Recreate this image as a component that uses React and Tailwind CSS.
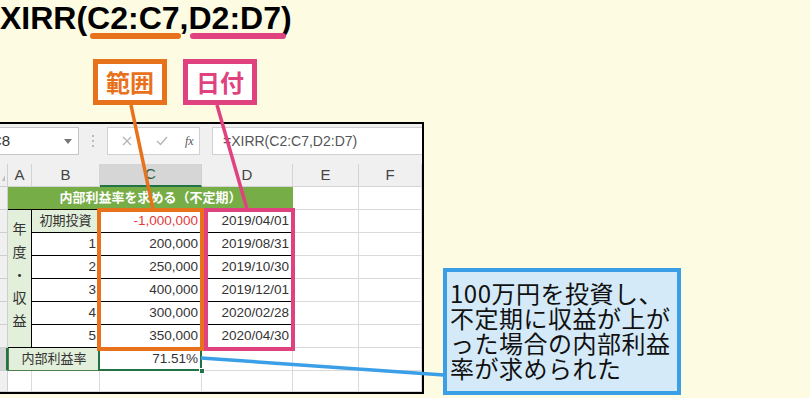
import React from 'react';

const ORANGE = '#e8711b';

// 空セル（グリッド線のみ）
function Empty() {
  return <div className="border-r border-b border-[#dadada] bg-white" />;
}

function RowHead({ selected = false }) {
  return (
    <div
      className={
        selected
          ? 'bg-[#d6d6d6] border-r-2 border-b border-r-[#217346] border-b-[#cfcfcf]'
          : 'bg-[#f0f0f0] border-r border-b border-[#cfcfcf]'
      }
    />
  );
}

function ColHead({ label, selected = false }) {
  return (
    <div
      className={
        selected
          ? 'bg-[#d6d6d6] border-r border-b-2 border-r-[#cfcfcf] border-b-[#217346] text-[#2b5a3f] text-[15px] flex items-center justify-center'
          : 'bg-[#f0f0f0] border-r border-b border-[#d4d4d4] text-[#444] text-[15px] flex items-center justify-center'
      }
    >
      {label}
    </div>
  );
}

function Num({ children, red = false }) {
  return (
    <div
      className={`border-r border-b border-black bg-white flex items-center justify-end pr-[3px] text-[13.5px] ${
        red ? 'text-[#e23b3b]' : 'text-[#333]'
      }`}
    >
      {children}
    </div>
  );
}

const rows = [
  { b: '1', c: '200,000', d: '2019/08/31' },
  { b: '2', c: '250,000', d: '2019/10/30' },
  { b: '3', c: '400,000', d: '2019/12/01' },
  { b: '4', c: '300,000', d: '2020/02/28' },
  { b: '5', c: '350,000', d: '2020/04/30' },
];

export default function App() {
  return (
    <div className="relative w-[810px] h-[398px] overflow-hidden bg-[#fdfbe2] font-['Liberation_Sans','Noto_Sans_CJK_JP',sans-serif]">
      {/* 数式タイトル */}
      <div className="h-[59px] text-[32px] leading-[36px] font-bold text-black whitespace-nowrap">
        XIRR(
        <span className="relative">
          C2:C7
          <span className="absolute left-[3px] right-[-1px] top-[33px] h-[6px] rounded-full bg-[#e8711b]" />
        </span>
        ,
        <span className="relative">
          D2:D7
          <span className="absolute left-[2px] right-[-5px] top-[33px] h-[6px] rounded-full bg-[#e0427f]" />
        </span>
        )
      </div>

      {/* ラベル */}
      <div className="flex gap-[16px] pl-[93px] h-[46px]">
        <div className="w-[74px] h-[46px] border-[5px] border-[#e8711b] bg-white flex items-center justify-center text-[24px] font-bold text-[#e8711b] font-['Noto_Sans_CJK_JP',sans-serif]">
          範囲
        </div>
        <div className="w-[74px] h-[46px] border-[5px] border-[#e0427f] bg-white flex items-center justify-center text-[24px] font-bold text-[#e0427f] font-['Noto_Sans_CJK_JP',sans-serif]">
          日付
        </div>
      </div>

      {/* Excel ウィンドウ */}
      <div className="mt-[17px] w-[424px] h-[272px] border-t-2 border-r-2 border-b-2 border-black bg-white flex flex-col">
        {/* 数式バー */}
        <div className="h-[40px] bg-[#f0f0f0] flex items-start pt-[3px]">
          <div className="ml-[-12px] w-[91px] h-[28px] bg-white border border-[#c6c6c6] flex items-center pl-[2px] pr-[6px] text-[15px] text-[#333]">
            C8
            <svg className="ml-auto" width="8" height="5" viewBox="0 0 8 5">
              <path d="M0 0 L8 0 L4 5 Z" fill="#777" />
            </svg>
          </div>
          <div className="w-[28px] h-[28px] flex flex-col items-center justify-center gap-[3px]">
            <span className="w-[2px] h-[2px] bg-[#bbb]" />
            <span className="w-[2px] h-[2px] bg-[#bbb]" />
            <span className="w-[2px] h-[2px] bg-[#bbb]" />
          </div>
          <div className="w-[93px] h-[28px] bg-white border border-[#d0d0d0] flex items-center">
            <svg className="ml-[14px]" width="10" height="10" viewBox="0 0 10 10">
              <path d="M1 1 L9 9 M9 1 L1 9" stroke="#b5b5b5" strokeWidth="1.3" />
            </svg>
            <svg className="ml-[24px]" width="12" height="10" viewBox="0 0 12 10">
              <path d="M1 5 L4.5 8.5 L11 1" stroke="#b5b5b5" strokeWidth="1.4" fill="none" />
            </svg>
            <span className="ml-[17px] text-[12px] italic text-[#555] font-['Liberation_Serif',serif]">fx</span>
          </div>
          <div className="ml-[12px] flex-1 h-[28px] bg-white border-y border-l border-[#d0d0d0] flex items-center pl-[10px] text-[14px] text-[#555]">
            =XIRR(C2:C7,D2:D7)
          </div>
        </div>

        {/* シート */}
        <div className="flex-1 grid grid-cols-[8px_24px_68px_102px_91px_66px_63px] grid-rows-[repeat(9,23px)_1fr]">
          {/* 列見出し */}
          <div className="bg-[#f0f0f0] border-r border-b border-[#cfcfcf] flex items-end justify-end p-[2px]">
            <svg width="6" height="12" viewBox="0 0 6 12">
              <path d="M6 0 L6 12 L0 12 Z" fill="#bdbdbd" />
            </svg>
          </div>
          <ColHead label="A" />
          <ColHead label="B" />
          <ColHead label="C" selected />
          <ColHead label="D" />
          <ColHead label="E" />
          <ColHead label="F" />

          {/* 1行目 */}
          <RowHead />
          <div className="col-span-4 bg-[#77ad47] border-b border-black text-white font-bold text-[13px] flex items-center justify-center">
            内部利益率を求める（不定期）
          </div>
          <Empty />
          <Empty />

          {/* 2行目 */}
          <RowHead />
          <div className="row-span-6 bg-[#e2efda] border-r border-b border-black flex flex-col items-center justify-center text-[14px] leading-[23px] text-[#333] pb-[6px]">
            <span>年</span>
            <span>度</span>
            <span>・</span>
            <span>収</span>
            <span>益</span>
          </div>
          <div className="bg-[#e2efda] border-r border-b border-black flex items-center justify-center text-[13px] text-[#333]">
            初期投資
          </div>
          <Num red>-1,000,000</Num>
          <Num>2019/04/01</Num>
          <Empty />
          <Empty />

          {rows.map((r) => (
            <React.Fragment key={r.b}>
              <RowHead />
              <Num>{r.b}</Num>
              <Num>{r.c}</Num>
              <Num>{r.d}</Num>
              <Empty />
              <Empty />
            </React.Fragment>
          ))}

          {/* 8行目 */}
          <RowHead selected />
          <div className="col-span-2 bg-[#e2efda] border-l border-r border-b border-[#4e7f4e] flex items-center justify-center text-[13px] text-[#333]">
            内部利益率
          </div>
          <div className="relative border-r border-b border-[#dadada] bg-white flex items-center justify-end pr-[3px] text-[13.5px] text-[#333]">
            71.51%
            <div className="absolute left-[-2px] top-[-1px] right-[-1px] bottom-[-1px] border-2 border-[#217346]" />
            <div className="absolute right-[-4px] bottom-[-4px] w-[6px] h-[6px] bg-[#217346] border border-white" />
          </div>
          <Empty />
          <Empty />
          <Empty />

          {/* 9行目 */}
          <RowHead />
          <Empty />
          <Empty />
          <Empty />
          <Empty />
          <Empty />
          <Empty />
        </div>
      </div>

      {/* 範囲の枠 */}
      <div className="absolute left-[97px] top-[208px] w-[107px] h-[143px] border-4 border-[#e8711b]" />
      <div className="absolute left-[204px] top-[208px] w-[91px] h-[143px] border-4 border-[#e0427f]" />

      {/* 引き出し線 */}
      <svg className="absolute left-0 top-0 pointer-events-none" width="810" height="398">
        <line x1="131" y1="105" x2="153" y2="209" stroke={ORANGE} strokeWidth="3.5" />
        <line x1="217" y1="105" x2="247" y2="209" stroke="#e0427f" strokeWidth="3.5" />
        <line x1="201" y1="358" x2="444" y2="375" stroke="#3a9fe6" strokeWidth="3.5" />
      </svg>

      {/* 吹き出し */}
      <div className="absolute left-[443px] top-[268px] w-[238px] h-[127px] border-4 border-[#3a9fe6] bg-[#d5eaf8] pl-[3px] pt-[8px] text-[24px] leading-[25px] tracking-[0.5px] text-[#111] font-['Noto_Sans_CJK_JP',sans-serif] whitespace-nowrap">
        <div>100万円を投資し、</div>
        <div>不定期に収益が上が</div>
        <div>った場合の内部利益</div>
        <div>率が求められた</div>
      </div>
    </div>
  );
}
